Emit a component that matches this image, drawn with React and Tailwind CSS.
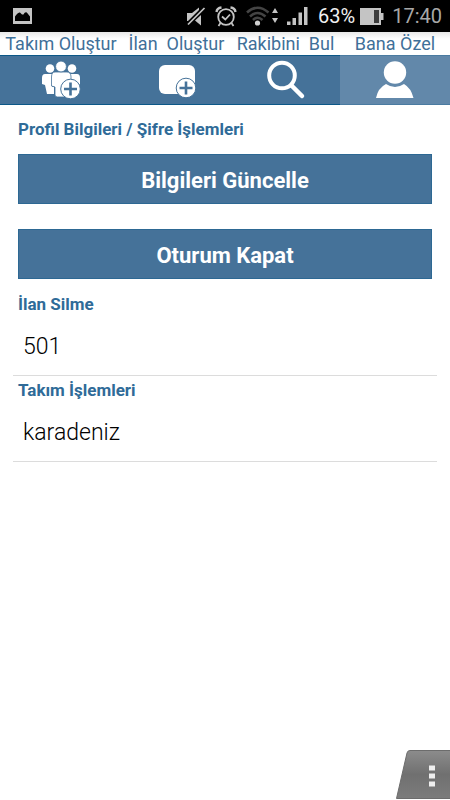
import React from 'react';

const PictureIcon = () => (
  <svg viewBox="0 0 19 16" className="w-[19px] h-4" aria-hidden="true">
    <path fill="#c4c4c4" d="M0 0H19V16H0Z" />
    <path fill="#000" d="M2 13V8.500C4 6.500 5.500 3.500 7.500 5L9 6.500H10.500C12 3.500 13.500 3.500 15 6L17 8.500V13Z" />
  </svg>
);

const MuteIcon = () => (
  <svg viewBox="0 0 20 20" className="w-5 h-5" fill="#c4c4c4" aria-hidden="true">
    <path d="M1 7H6L13 1.500V4L2 15H1ZM15 9V19.500L9 14.500Z" />
    <path stroke="#c4c4c4" strokeWidth="1.7" d="M2 18.500L18.500 2" />
  </svg>
);

const AlarmIcon = () => (
  <svg viewBox="0 0 22 21" className="w-[22px] h-[21px]" fill="none" stroke="#c4c4c4" aria-hidden="true">
    <circle cx="11" cy="11" r="7.8" strokeWidth="1.8" />
    <path strokeWidth="1.8" d="M7 10.5L10.3 13.5L15 8.5M5.5 17L3.5 20M16.5 17L18.5 20" />
    <path strokeWidth="2.4" d="M1.5 6Q2 2 6.5 1.5M20.5 6Q20 2 15.5 1.5" />
  </svg>
);

const WifiIcon = () => (
  <svg viewBox="0 0 32 20" className="w-8 h-5" fill="none" aria-hidden="true">
    <g stroke="#444" strokeWidth="2.6">
      <path d="M1 6.5Q11.5 -3 22.5 6.5" />
      <path d="M4 10.5Q11.5 3.5 19.5 10.5" />
      <path d="M7 14Q11.5 9.5 16.5 14" />
    </g>
    <circle cx="11.5" cy="17" r="2.6" fill="#d0d0d0" />
    <path fill="#c4c4c4" d="M26 7L29 2L32 7ZM26 12H32L29 17Z" />
  </svg>
);

const SignalIcon = () => (
  <svg viewBox="0 0 21 18" className="w-[21px] h-[18px]" fill="#c4c4c4" aria-hidden="true">
    <path d="M0 14.5H3.5V18H0ZM5.5 11H9V18H5.5ZM11.5 5.5H15V18H11.5ZM17 0H20.5V18H17Z" />
  </svg>
);

const BatteryIcon = () => (
  <svg viewBox="0 0 24 17" className="w-6 h-[17px]" aria-hidden="true">
    <path fill="#c4c4c4" d="M0 0H21V5H23.5V12H21V17H0Z" />
    <path fill="#3c3c3c" d="M14 2H19V15H14Z" />
  </svg>
);

const PlusBadge = ({ cx, cy }) => (
  <g>
    <circle cx={cx} cy={cy} r="9.8" fill="#fff" stroke="#457299" strokeWidth="1" />
    <path stroke="#457299" strokeWidth="2.6" d={`M${cx - 6.5} ${cy}h13M${cx} ${cy - 6.5}v13`} />
  </g>
);

const TeamIcon = () => (
  <svg viewBox="0 0 40 40" className="w-10 h-10" fill="#fff" aria-hidden="true">
    <circle cx="9" cy="8.5" r="4.3" />
    <circle cx="31" cy="8.5" r="4.3" />
    <path d="M4 14H12L11 27H13V34H6L4 25L1 24V18Q1 14 4 14ZM36 14H28L29 27H36L39 24V18Q39 14 36 14Z" />
    <g stroke="#457299" strokeWidth="0.8">
      <path d="M14 12H26Q30 12 30 17V26L26.5 27V35Q26.5 37 24 37H16.5Q14 37 14 35V27L10.5 26V17Q10.5 12 14 12Z" />
      <circle cx="20" cy="6.5" r="5.4" />
    </g>
    <PlusBadge cx={29.5} cy={29} />
  </svg>
);

const CardIcon = () => (
  <svg viewBox="0 0 40 40" className="w-10 h-10" fill="#fff" aria-hidden="true">
    <rect x="2" y="5" width="36" height="29" rx="6" />
    <PlusBadge cx={29} cy={28} />
  </svg>
);

const SearchIcon = () => (
  <svg viewBox="0 0 40 40" className="w-10 h-10" fill="none" stroke="#fff" aria-hidden="true">
    <circle cx="16" cy="15.5" r="12.8" strokeWidth="4" />
    <path strokeWidth="4.5" strokeLinecap="round" d="M25.5 25.5L36 36" />
  </svg>
);

const UserIcon = () => (
  <svg viewBox="0 0 40 40" className="w-10 h-10" fill="#fff" aria-hidden="true">
    <circle cx="20" cy="12.5" r="11.2" />
    <path d="M1 38Q3 28 11 24Q20 30 29 24Q36 28 38.5 38Z" />
  </svg>
);

const tabs = [
  { label: 'Takım Oluştur', icon: <TeamIcon /> },
  { label: 'İlan  Oluştur', icon: <CardIcon /> },
  { label: 'Rakibini  Bul', icon: <SearchIcon /> },
  { label: 'Bana Özel', icon: <UserIcon />, active: true },
];

const StatusBar = () => (
  <header className="flex h-8 items-center bg-black pl-[13px] pr-2 text-xl leading-8">
    <PictureIcon />
    <div className="ml-auto flex items-center">
      <div className="mr-[10px] flex items-center gap-[9px]">
        <MuteIcon />
        <AlarmIcon />
        <WifiIcon />
        <SignalIcon />
      </div>
      <span className="mr-[5px] text-[#f0f0f0]">63%</span>
      <BatteryIcon />
      <span className="ml-2 text-[#a8a8a8]">17:40</span>
    </div>
  </header>
);

const TabBar = () => (
  <nav className="grid grid-cols-[122fr_109fr_109fr_110fr]">
    {tabs.map(({ label, icon, active }) => (
      <button key={label} type="button" className="flex flex-col" aria-current={active ? 'page' : undefined}>
        <span className="flex h-[23px] w-full items-center justify-center whitespace-pre bg-linear-to-b from-[#e8e8e8] to-white to-30% text-lg leading-6 text-[#3f7099]">
          {label}
        </span>
        <span
          className={`flex h-[50px] w-full items-center justify-center border-y ${
            active ? 'border-[#4a7ba1] bg-[#6288aa]' : 'border-[#0c5888] bg-[#457299]'
          }`}
        >
          {icon}
        </span>
      </button>
    ))}
  </nav>
);

const ActionButton = ({ children }) => (
  <button
    type="button"
    className="h-[50px] w-full border border-[#2d6893] bg-[#457299] pt-[2px] text-[22px] font-bold text-white"
  >
    {children}
  </button>
);

const ListSection = ({ title, item }) => (
  <section>
    <h2 className="pl-[5px] text-[17px] leading-7 font-bold text-[#2f6b98]">{title}</h2>
    <ul>
      <li className="border-b border-[#dcdcdc] px-[10px] text-[23px] leading-[57px] font-light text-black">{item}</li>
    </ul>
  </section>
);

export default function App() {
  return (
    <div className="relative flex min-h-screen flex-col bg-white font-['Roboto',sans-serif]">
      <StatusBar />
      <TabBar />
      <main className="px-[13px]">
        <h2 className="pl-[5px] text-[17px] leading-[49px] font-bold text-[#2f6b98]">
          Profil Bilgileri / Şifre İşlemleri
        </h2>
        <div className="mb-[11px] flex flex-col gap-[25px] px-[5px]">
          <ActionButton>Bilgileri Güncelle</ActionButton>
          <ActionButton>Oturum Kapat</ActionButton>
        </div>
        <ListSection title="İlan Silme" item="501" />
        <ListSection title="Takım İşlemleri" item="karadeniz" />
      </main>
      <button type="button" aria-label="Menü" className="absolute right-0 bottom-0 h-[50px] w-[55px]">
        <svg viewBox="0 0 55 50" className="h-full w-full" aria-hidden="true">
          <defs>
            <linearGradient id="menu-fill" x1="0" y1="0" x2="0" y2="1">
              <stop offset="0" stopColor="#8c8c8c" />
              <stop offset="0.5" stopColor="#707070" />
              <stop offset="1" stopColor="#7c7c7c" />
            </linearGradient>
          </defs>
          <path fill="url(#menu-fill)" stroke="#6c6c6c" d="M1.5 48.5L12 3Q12.5 0.5 15 0.5H56V48.5Z" />
          <path fill="#eee" d="M34 15.5H40V20.5H34ZM34 23.5H40V28.5H34ZM34 31.5H40V36.5H34Z" />
        </svg>
      </button>
    </div>
  );
}
